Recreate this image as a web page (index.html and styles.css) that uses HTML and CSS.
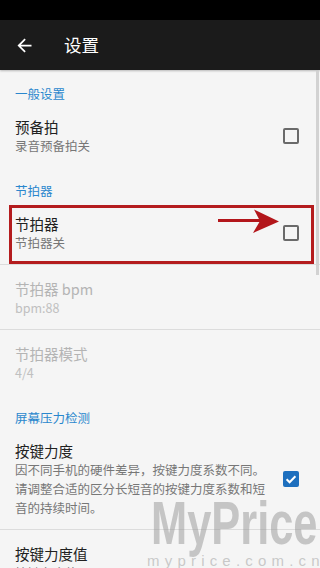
FILE: index.html
```html
<!DOCTYPE html>
<html lang="zh-CN">
<head>
<meta charset="utf-8">
<title>设置</title>
<link rel="stylesheet" href="styles.css">
</head>
<body>
<div class="screen">
  <div class="statusbar"></div>
  <header class="toolbar">
    <svg class="back" viewBox="0 0 24 24" width="21" height="21"><path fill="#fff" d="M20 11H7.83l5.59-5.59L12 4l-8 8 8 8 1.41-1.41L7.83 13H20v-2z"/></svg>
    <span class="toolbar-title">设置</span>
  </header>

  <main class="prefs">
    <div class="cat">一般设置</div>
    <div class="item">
      <div class="text">
        <div class="title">预备拍</div>
        <div class="sub">录音预备拍关</div>
      </div>
      <span class="check"></span>
    </div>

    <div class="cat">节拍器</div>
    <div class="item divided">
      <div class="text">
        <div class="title">节拍器</div>
        <div class="sub">节拍器关</div>
      </div>
      <span class="check"></span>
    </div>
    <div class="item divided disabled">
      <div class="text">
        <div class="title">节拍器 bpm</div>
        <div class="sub">bpm:88</div>
      </div>
    </div>
    <div class="item disabled">
      <div class="text">
        <div class="title">节拍器模式</div>
        <div class="sub">4/4</div>
      </div>
    </div>

    <div class="cat">屏幕压力检测</div>
    <div class="item divided">
      <div class="text">
        <div class="title">按键力度</div>
        <div class="sub">因不同手机的硬件差异，按键力度系数不同。请调整合适的区分长短音的按键力度系数和短音的持续时间。</div>
      </div>
      <span class="check on"><svg viewBox="0 0 16 16" width="16" height="16"><path d="M3.6 8.2l3 3 5.8-6" fill="none" stroke="#fff" stroke-width="2"/></svg></span>
    </div>
    <div class="item">
      <div class="text">
        <div class="title">按键力度值</div>
        <div class="sub">按键力度值：5</div>
      </div>
    </div>
  </main>

  <div class="scrollbar"></div>
  <div class="highlight"></div>
  <svg class="pointer" viewBox="0 0 75 35" width="75" height="35">
    <rect x="8" y="14" width="44" height="3" fill="#b3161b"/>
    <path d="M44 4.5 L69 16.5 L43 28 L50 16 Z" fill="#b3161b"/>
  </svg>
  <div class="wm-big">MyPrice</div>
  <div class="wm-small">myprice.com.cn</div>
</div>
</body>
</html>
```
FILE: styles.css
```css
html, body {
  margin: 0;
  padding: 0;
}
body {
  font-family: "Noto Sans CJK SC", "Noto Sans", Roboto, sans-serif;
  background: #f5f5f5;
}
.screen {
  position: relative;
  width: 320px;
  height: 568px;
  overflow: hidden;
  background: #f5f5f5;
}
.statusbar {
  height: 20px;
  background: #000;
}
.toolbar {
  height: 50px;
  background: #1b1b1b;
  display: flex;
  align-items: center;
  padding-left: 14px;
  box-shadow: 0 1px 2px rgba(0,0,0,0.25);
}
.back {
  display: block;
  flex: none;
}
.toolbar-title {
  margin-left: 29px;
  color: #fff;
  font-size: 17.5px;
  line-height: 22px;
}
.prefs {
  display: flex;
  flex-direction: column;
}
.cat {
  padding: 16px 15px 2px;
  font-size: 12.5px;
  line-height: 15px;
  color: #2a87cd;
}
.item {
  display: flex;
  align-items: center;
  padding: 14px 20px 12px 15px;
  min-height: 38px;
}
.item.divided {
  border-bottom: 1px solid #dcdcdc;
}
.text {
  flex: 1;
  min-width: 0;
  padding-right: 18px;
}
.title {
  font-size: 14.5px;
  line-height: 20px;
  color: #212121;
}
.sub {
  margin-top: -1px;
  font-size: 12.5px;
  line-height: 19px;
  color: #777;
}
.disabled .title {
  color: #b4b4b4;
}
.disabled .sub {
  color: #c0c0c0;
}
.check {
  flex: none;
  width: 16px;
  height: 16px;
  box-sizing: border-box;
  border: 2px solid #6a6a6a;
  border-radius: 2px;
  margin-right: 1px;
}
.check.on {
  border: none;
  background: #1d6fbe;
  display: flex;
}
.check.on svg {
  display: block;
}
.scrollbar {
  position: absolute;
  left: 316px;
  top: 71px;
  width: 3px;
  height: 204px;
  background: #d2d2d2;
}
.highlight {
  position: absolute;
  left: 9px;
  top: 205px;
  width: 305px;
  height: 59px;
  box-sizing: border-box;
  border: 3px solid #b41c1e;
}
.pointer {
  position: absolute;
  left: 210px;
  top: 205px;
}
.wm-big {
  position: absolute;
  left: 151px;
  top: 485px;
  font-family: "Liberation Sans", Arial, sans-serif;
  font-weight: bold;
  font-size: 62px;
  line-height: 76px;
  color: rgba(150,150,150,0.5);
  transform: scaleX(0.7);
  transform-origin: left top;
  white-space: nowrap;
}
.wm-small {
  position: absolute;
  left: 147px;
  top: 552px;
  font-family: "Liberation Sans", Arial, sans-serif;
  font-size: 15px;
  line-height: 18px;
  letter-spacing: 5.2px;
  color: rgba(170,170,170,0.6);
  white-space: nowrap;
}
```
